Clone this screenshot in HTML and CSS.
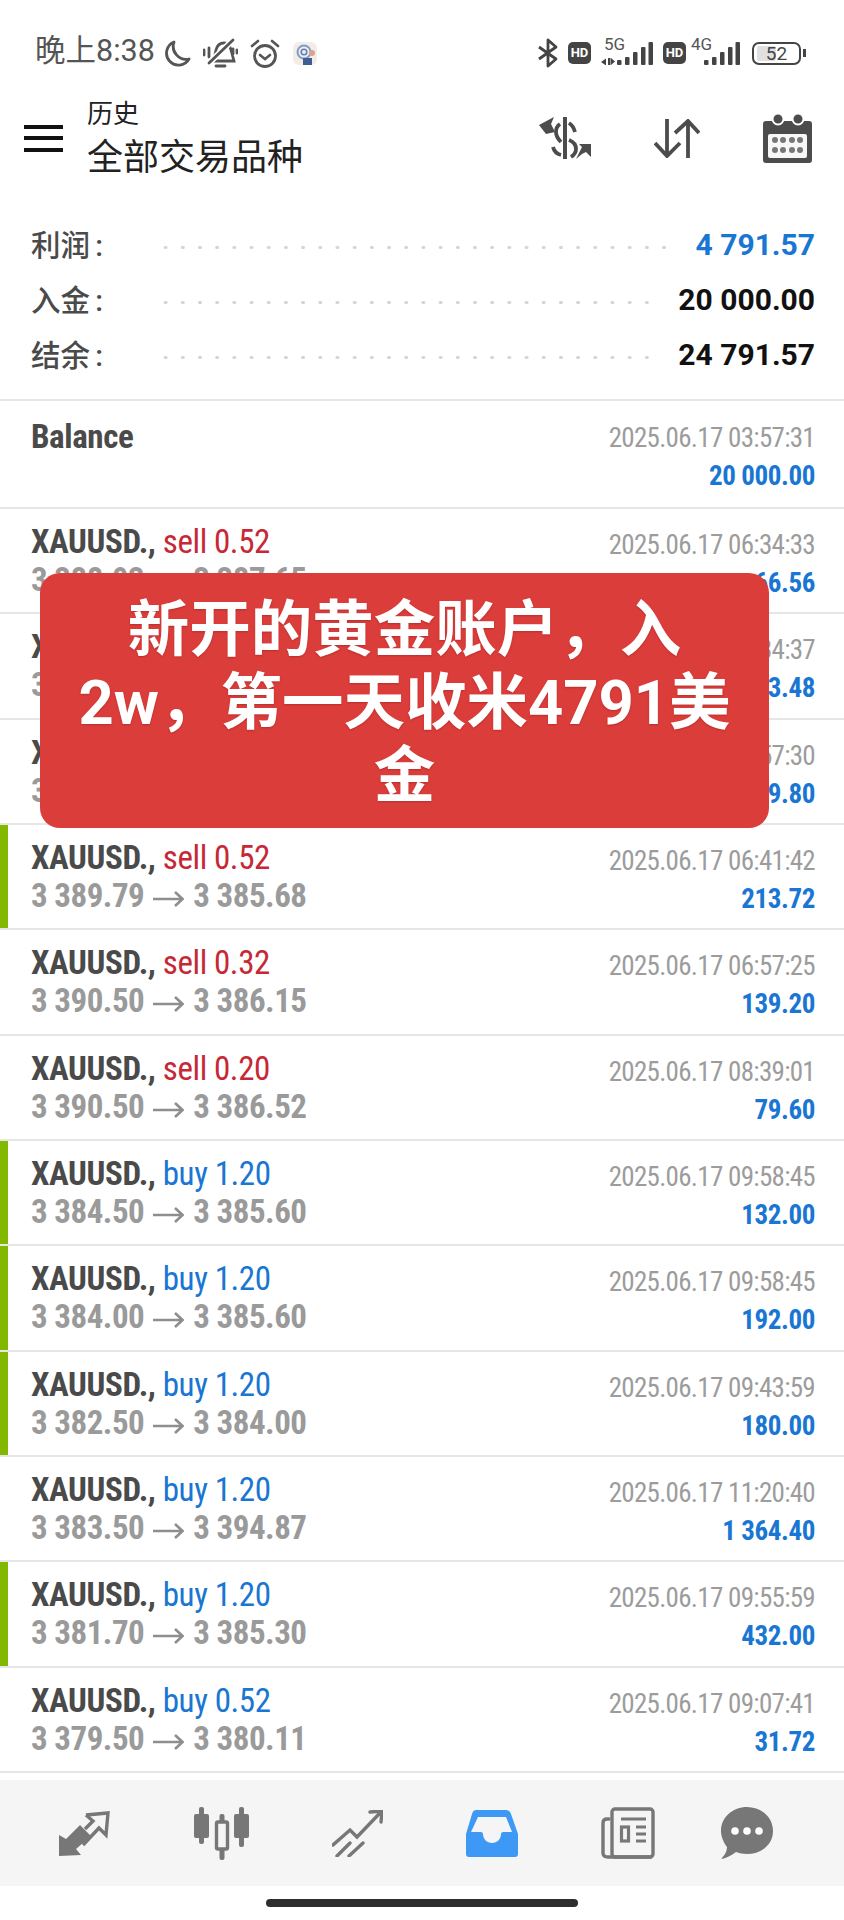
FILE: index.html
```html
<!DOCTYPE html>
<html lang="zh">
<head>
<meta charset="utf-8">
<title>历史</title>
<link rel="stylesheet" href="styles.css">
</head>
<body>
<svg class="defs" width="0" height="0"><symbol id="arr" viewBox="0 0 31 16"><path d="M0 8h29M22 1l7.500 7l-7.500 7" fill="none" stroke="#8E8E8E" stroke-width="2.600"/></symbol></svg>
<div id="screen">

<div class="status">
  <div class="status-left">
    <span class="clock">晚上8:38</span>
    <svg class="moon" width="28" height="27" viewBox="0 0 28 27"><path d="M11 2a12 12 0 1 0 15 17a13 13 0 0 1-15-17z" fill="none" stroke="#555" stroke-width="2.800" stroke-linejoin="round"/></svg>
    <svg class="bell" width="35" height="30" viewBox="0 0 35 30"><path d="M9 23c3-3 3-7 4-11c1-4 4-7 8-7c4 0 6 3 7 7l3 11zM13 28h9M1 12v5M6 10v9M30 11v5M34 12v3" fill="none" stroke="#555" stroke-width="2.800" stroke-linecap="round"/><path d="M31 1L5 26" stroke="#FFF" stroke-width="6"/><path d="M30 2L6 25" stroke="#555" stroke-width="2.800" stroke-linecap="round"/></svg>
    <svg class="alarm" width="30" height="29" viewBox="0 0 30 29"><circle cx="15" cy="17" r="10.500" fill="none" stroke="#555" stroke-width="2.800"/><path d="M10 16l5 4l5-4M2 7l6-5M28 7l-6-5" fill="none" stroke="#555" stroke-width="2.600" stroke-linecap="round"/></svg>
    <svg class="app" width="24" height="23" viewBox="0 0 24 23"><rect width="24" height="23" rx="6" fill="#F3EDE6"/><circle cx="11" cy="10" r="6.500" fill="none" stroke="#7E9BD0" stroke-width="2"/><circle cx="11" cy="10" r="2.800" fill="none" stroke="#5A7FC0" stroke-width="1.500"/><path d="M10 23v-7h9v7z" fill="#3D5F95"/><circle cx="19" cy="11" r="3" fill="#D9A58C"/></svg>
  </div>
  <div class="status-right">
    <svg class="bt" width="20" height="30" viewBox="0 0 20 30"><path d="M1 9l17 12l-8 7V2l8 7L1 21" fill="none" stroke="#444" stroke-width="2.800" stroke-linejoin="round"/></svg>
    <span class="hd">HD</span>
    <span class="sim sim-5g">
      <span class="net">5G</span>
      <svg width="52" height="23" viewBox="0 0 52 23"><path d="M0 20l5-3.500v7zM7 16h2.500v7H7zM10 16l4 3.500l-4 3.500z" fill="#444"/><rect x="16" y="18" width="4.500" height="5" rx="1" fill="#444"/><rect x="24" y="15" width="4.500" height="8" rx="1" fill="#444"/><rect x="32" y="10" width="4.500" height="13" rx="1" fill="#444"/><rect x="40" y="5" width="4.500" height="18" rx="1" fill="#444"/><rect x="47.500" y="0" width="4.500" height="23" rx="1" fill="#444"/></svg>
    </span>
    <span class="hd hd-2">HD</span>
    <span class="sim sim-4g">
      <span class="net">4G</span>
      <svg width="49" height="23" viewBox="0 0 49 23"><rect x="13" y="18" width="4.500" height="5" rx="1" fill="#444"/><rect x="21" y="15" width="4.500" height="8" rx="1" fill="#444"/><rect x="29" y="10" width="4.500" height="13" rx="1" fill="#444"/><rect x="37" y="5" width="4.500" height="18" rx="1" fill="#444"/><rect x="44.500" y="0" width="4.500" height="23" rx="1" fill="#444"/></svg>
    </span>
    <span class="battery"><span class="battery-fill"></span><span class="battery-num">52</span></span>
    <span class="battery-tip"></span>
  </div>
</div>

<div class="toolbar">
  <div class="burger"><i></i><i></i><i></i></div>
  <div class="titles">
    <div class="sub">历史</div>
    <div class="title">全部交易品种</div>
  </div>
  <div class="tools">
    <svg width="52" height="42" viewBox="0 0 52 42"><rect x="24" y="0" width="4" height="42" fill="#4C4C4C"/><path d="M21 7c-3 2-4 5-4 8c0 4 2 7 5 10M30 6c3 2 5 5 6 9M30 23c5 2 7 5 7 9c0 3-2 6-5 8M14 30c1 4 4 7 8 8" fill="none" stroke="#4C4C4C" stroke-width="3.800"/><path d="M0 8L15 0l-3 7l4 8l-9 2zM37 42l6-12l-3-3h12v13l-5-5l-4 2z" fill="#4C4C4C"/></svg>
    <svg width="46" height="39" viewBox="0 0 46 39"><path d="M13 0v37M1 24l12 13l13-13M34 39V2M21 14L34 2l11 12" fill="none" stroke="#4C4C4C" stroke-width="3.800"/></svg>
    <svg width="49" height="49" viewBox="0 0 49 49"><rect x="0" y="7" width="49" height="42" rx="3" fill="#4C4C4C"/><rect x="5" y="20" width="39" height="24" rx="2" fill="#F7F7F7"/><circle cx="15" cy="5" r="5.500" fill="#4C4C4C" stroke="#FFF" stroke-width="2"/><circle cx="35" cy="5" r="5.500" fill="#4C4C4C" stroke="#FFF" stroke-width="2"/><g fill="#777"><circle cx="12" cy="26" r="3"/><circle cx="20" cy="26" r="3"/><circle cx="29" cy="26" r="3"/><circle cx="37" cy="26" r="3"/><circle cx="12" cy="36" r="3"/><circle cx="20" cy="36" r="3"/><circle cx="29" cy="36" r="3"/><circle cx="37" cy="36" r="3"/></g></svg>
  </div>
</div>

<div class="summary">
  <div class="sum-row"><span class="sum-label">利润 :</span><span class="dots"></span><span class="sum-val profit">4 791.57</span></div>
  <div class="sum-row"><span class="sum-label">入金 :</span><span class="dots"></span><span class="sum-val">20 000.00</span></div>
  <div class="sum-row"><span class="sum-label">结余 :</span><span class="dots"></span><span class="sum-val">24 791.57</span></div>
</div>

<div class="list">
  <div class="row row-balance">
    <div class="cell-left"><div class="sym">Balance</div></div>
    <div class="cell-right"><div class="time">2025.06.17 03:57:31</div><div class="amt">20 000.00</div></div>
  </div>
  <div class="row">
    <div class="cell-left"><div class="sym">XAUUSD., <span class="sell">sell 0.52</span></div><div class="prices">3 388.93<svg class="arrow"><use href="#arr"/></svg>3 387.65</div></div>
    <div class="cell-right"><div class="time">2025.06.17 06:34:33</div><div class="amt">66.56</div></div>
  </div>
  <div class="row">
    <div class="cell-left"><div class="sym">XAUUSD., <span class="sell">sell 0.52</span></div><div class="prices">3 389.79<svg class="arrow"><use href="#arr"/></svg>3 385.68</div></div>
    <div class="cell-right"><div class="time">2025.06.17 06:34:37</div><div class="amt">213.48</div></div>
  </div>
  <div class="row">
    <div class="cell-left"><div class="sym">XAUUSD., <span class="sell">sell 0.52</span></div><div class="prices">3 389.79<svg class="arrow"><use href="#arr"/></svg>3 385.68</div></div>
    <div class="cell-right"><div class="time">2025.06.17 06:57:30</div><div class="amt">209.80</div></div>
  </div>
  <div class="row win">
    <div class="cell-left"><div class="sym">XAUUSD., <span class="sell">sell 0.52</span></div><div class="prices">3 389.79<svg class="arrow"><use href="#arr"/></svg>3 385.68</div></div>
    <div class="cell-right"><div class="time">2025.06.17 06:41:42</div><div class="amt">213.72</div></div>
  </div>
  <div class="row">
    <div class="cell-left"><div class="sym">XAUUSD., <span class="sell">sell 0.32</span></div><div class="prices">3 390.50<svg class="arrow"><use href="#arr"/></svg>3 386.15</div></div>
    <div class="cell-right"><div class="time">2025.06.17 06:57:25</div><div class="amt">139.20</div></div>
  </div>
  <div class="row">
    <div class="cell-left"><div class="sym">XAUUSD., <span class="sell">sell 0.20</span></div><div class="prices">3 390.50<svg class="arrow"><use href="#arr"/></svg>3 386.52</div></div>
    <div class="cell-right"><div class="time">2025.06.17 08:39:01</div><div class="amt">79.60</div></div>
  </div>
  <div class="row win">
    <div class="cell-left"><div class="sym">XAUUSD., <span class="buy">buy 1.20</span></div><div class="prices">3 384.50<svg class="arrow"><use href="#arr"/></svg>3 385.60</div></div>
    <div class="cell-right"><div class="time">2025.06.17 09:58:45</div><div class="amt">132.00</div></div>
  </div>
  <div class="row win">
    <div class="cell-left"><div class="sym">XAUUSD., <span class="buy">buy 1.20</span></div><div class="prices">3 384.00<svg class="arrow"><use href="#arr"/></svg>3 385.60</div></div>
    <div class="cell-right"><div class="time">2025.06.17 09:58:45</div><div class="amt">192.00</div></div>
  </div>
  <div class="row win">
    <div class="cell-left"><div class="sym">XAUUSD., <span class="buy">buy 1.20</span></div><div class="prices">3 382.50<svg class="arrow"><use href="#arr"/></svg>3 384.00</div></div>
    <div class="cell-right"><div class="time">2025.06.17 09:43:59</div><div class="amt">180.00</div></div>
  </div>
  <div class="row">
    <div class="cell-left"><div class="sym">XAUUSD., <span class="buy">buy 1.20</span></div><div class="prices">3 383.50<svg class="arrow"><use href="#arr"/></svg>3 394.87</div></div>
    <div class="cell-right"><div class="time">2025.06.17 11:20:40</div><div class="amt">1 364.40</div></div>
  </div>
  <div class="row win">
    <div class="cell-left"><div class="sym">XAUUSD., <span class="buy">buy 1.20</span></div><div class="prices">3 381.70<svg class="arrow"><use href="#arr"/></svg>3 385.30</div></div>
    <div class="cell-right"><div class="time">2025.06.17 09:55:59</div><div class="amt">432.00</div></div>
  </div>
  <div class="row">
    <div class="cell-left"><div class="sym">XAUUSD., <span class="buy">buy 0.52</span></div><div class="prices">3 379.50<svg class="arrow"><use href="#arr"/></svg>3 380.11</div></div>
    <div class="cell-right"><div class="time">2025.06.17 09:07:41</div><div class="amt">31.72</div></div>
  </div>
</div>

<div class="nav">
  <svg width="53" height="46" viewBox="0 0 53 46"><path d="M1 46V25l7 4L22 15l11 11L18 39l5 6z" fill="#777"/><path d="M28 5l22-2l-2 22l-7-7L25 35M28 5l7 6l-8 8" fill="none" stroke="#777" stroke-width="3.400"/></svg>
  <svg width="55" height="53" viewBox="0 0 55 53"><g fill="#777"><rect x="0" y="7" width="15" height="24" rx="2"/><rect x="5" y="0" width="5" height="37" rx="2"/><rect x="40" y="7" width="15" height="24" rx="2"/><rect x="45" y="0" width="5" height="40" rx="2"/><rect x="25.500" y="7" width="5" height="46" rx="2"/></g><rect x="22.500" y="15" width="11" height="27" rx="1.500" fill="#F5F5F5" stroke="#777" stroke-width="3.400"/></svg>
  <svg width="51" height="47" viewBox="0 0 51 47"><path d="M1 35l17-15l7 7L47 4M38 2l12-1l-1 11" fill="none" stroke="#777" stroke-width="3.400" stroke-linecap="round"/><path d="M5 46l13-13M17 46l14-13" fill="none" stroke="#777" stroke-width="3.400" stroke-linecap="round"/></svg>
  <svg width="52" height="47" viewBox="0 0 52 47"><path d="M10 0h29c3 0 5 1 6 4l7 20v20c0 2-1 3-3 3H3c-2 0-3-1-3-3V24L6 4c1-3 2-4 4-4z" fill="#3D99F5"/><path d="M12 7h28l6 15H37c-1 0-2 1-2 2c0 5-4 9-9 9s-9-4-9-9c0-1-1-2-2-2H5z" fill="#F5F5F5"/></svg>
  <svg width="54" height="52" viewBox="0 0 54 52"><path d="M8 12H6c-3 0-4 2-4 4v30c0 3 2 4 5 4h43" fill="none" stroke="#777" stroke-width="3.400" stroke-linecap="round"/><rect x="11" y="2" width="41" height="48" rx="3" fill="none" stroke="#777" stroke-width="3.400"/><path d="M20 12h25M35 20h10M35 27h10M35 34h10" fill="none" stroke="#777" stroke-width="3.200"/><rect x="20.500" y="20" width="7" height="14" fill="none" stroke="#777" stroke-width="3.200"/></svg>
  <svg class="nav-last" width="52" height="52" viewBox="0 0 52 52"><path d="M26 0c14 0 26 10 26 24S40 47 26 47c-4 0-8-1-11-2c-4 3-9 6-15 7c3-3 6-7 6-12C3 36 0 30 0 24C0 10 12 0 26 0z" fill="#777"/><circle cx="14" cy="24" r="3.800" fill="#FFF"/><circle cx="26" cy="24" r="3.800" fill="#FFF"/><circle cx="38" cy="24" r="3.800" fill="#FFF"/></svg>
</div>
<div class="home"><span class="home-bar"></span></div>

<div class="overlay">新开的黄金账户，入<br>2w，第一天收米4791美<br>金</div>

</div>
</body>
</html>
```
FILE: styles.css
```css
* {
box-sizing:border-box;
}
html, body {
margin:0;
padding:0;
background-color:#FFF;
}
.defs {
position:absolute;
}
#screen {
width:844px;
height:1920px;
position:relative;
overflow:hidden;
font-family:Roboto, "Noto Sans CJK SC", sans-serif;
}

/* status bar */
.status {
height:96px;
padding:10px 38px 0 35px;
display:flex;
justify-content:space-between;
align-items:center;
}
.status-left, .status-right {
display:flex;
align-items:center;
}
.clock {
font-size:30.500px;
line-height:40px;
margin-bottom:4px;
color:#555;
}
.moon {
margin-left:8px;
}
.bell, .alarm {
margin-left:12px;
}
.app {
margin-left:13px;
}
.hd {
width:23px;
height:22px;
background-color:#444;
color:#FFF;
border-radius:5px;
font-size:13px;
font-weight:700;
text-align:center;
line-height:22px;
margin:0 10px;
}
.hd-2 {
margin-right:5px;
}
.sim {
position:relative;
display:flex;
}
.net {
position:absolute;
top:-6px;
font-size:17px;
line-height:17px;
color:#555;
}
.sim-5g .net {
left:3px;
}
.sim-4g .net {
left:0;
}
.battery {
width:49px;
height:23px;
border:2px solid #444;
border-radius:7px;
margin-left:12px;
position:relative;
text-align:center;
}
.battery-fill {
position:absolute;
left:3px;
top:2px;
bottom:2px;
width:19px;
background-color:#E0E0E0;
border-radius:2px;
}
.battery-num {
position:relative;
font-size:19px;
line-height:19px;
color:#444;
display:block;
}
.battery-tip {
width:3px;
height:8px;
background-color:#444;
margin-left:2px;
}

/* toolbar */
.toolbar {
height:84px;
display:flex;
align-items:center;
padding-left:24px;
}
.burger {
width:39px;
margin-right:24px;
}
.burger i {
display:block;
height:4px;
background-color:#111;
margin-bottom:7.500px;
}
.burger i:last-child {
margin-bottom:0;
}
.titles {
flex:1;
align-self:flex-start;
padding-top:2px;
}
.sub {
font-size:26px;
line-height:32px;
color:#222;
}
.title {
font-size:36px;
line-height:56px;
color:#222;
}
.tools {
display:flex;
align-items:center;
gap:63px;
padding-right:32px;
}

/* summary block */
.summary {
height:221px;
padding:37px 29px 0 31px;
border-bottom:2px solid #E6E6E6;
}
.sum-row {
height:55px;
display:flex;
align-items:center;
}
.sum-label {
width:126px;
font-size:29.500px;
font-weight:500;
color:#4A4A4A;
word-spacing:-2px;
margin-bottom:4px;
}
.dots {
flex:1;
height:3px;
margin:6px 20px 0 0;
background-image:radial-gradient(circle, #D4D4D4 1.400px, transparent 2.200px);
background-size:17.200px 3px;
background-repeat:repeat-x;
}
.sum-val {
font-size:30px;
font-weight:700;
color:#111;
}
.sum-val.profit {
color:#1976D2;
}

/* deals */
.row {
height:105.350px;
display:flex;
justify-content:space-between;
padding:15px 29px 0 31px;
border-bottom:2px solid #E6E6E6;
position:relative;
}
.row-balance {
height:108px;
padding-top:16px;
}
.row-balance .sym {
margin-top:2px;
}
.win:before {
content:"";
position:absolute;
left:0;
top:0;
bottom:0;
width:8px;
background-color:#82B800;
}
.sym {
font-size:33px;
line-height:36px;
font-weight:700;
color:#4A4A4A;
font-stretch:75%;
letter-spacing:-0.4px;
}
.sell, .buy {
font-weight:400;
}
.sell {
color:#C62835;
}
.buy {
color:#1976D2;
}
.prices {
font-size:33px;
line-height:40px;
font-weight:700;
color:#9A9A9A;
font-stretch:75%;
letter-spacing:-0.5px;
}
.arrow {
width:31px;
height:16px;
margin:0 9px;
}
.cell-right {
text-align:right;
padding-top:2px;
}
.time {
font-size:27px;
line-height:38px;
color:#9C9C9C;
font-stretch:75%;
letter-spacing:-0.7px;
}
.amt {
font-size:27px;
line-height:38px;
font-weight:700;
color:#1976D2;
font-stretch:75%;
letter-spacing:-0.4px;
}

/* bottom nav */
.nav {
position:absolute;
left:0;
right:0;
top:1780px;
height:106px;
background-color:#F5F5F5;
display:flex;
align-items:center;
gap:83px;
padding-left:58px;
}
.nav-last {
margin-left:-17px;
}
.home {
position:absolute;
left:0;
right:0;
top:1886px;
height:34px;
display:flex;
justify-content:center;
padding-top:13px;
}
.home-bar {
width:312px;
height:8px;
border-radius:4px;
background-color:#2E2E2E;
}

/* red caption laid over the list */
.overlay {
position:absolute;
left:40px;
top:573px;
width:729px;
height:255px;
background-color:#DB3D3A;
border-radius:20px;
color:#FFF;
font-size:61.500px;
font-weight:700;
line-height:73px;
text-align:center;
padding-top:21px;
text-shadow:0 1px 2px rgba(120,20,20,0.35);
white-space:nowrap;
}
```
